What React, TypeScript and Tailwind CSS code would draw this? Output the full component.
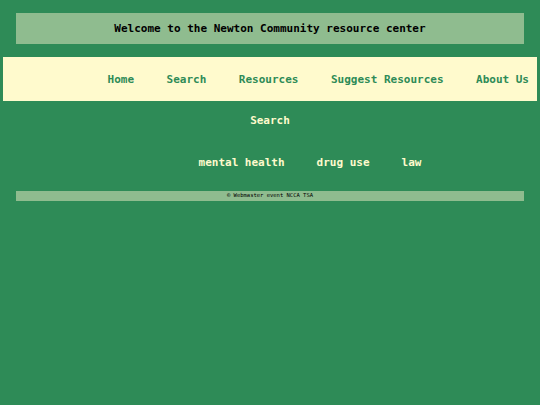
export default function App() {
  const mono = { fontFamily: '"DejaVu Sans Mono", monospace' }
  return (
    <div className="min-h-screen bg-[#2e8b57] flex flex-col" style={mono}>
      {/* Welcome banner */}
      <header className="mx-4 mt-[13px] h-[31px] bg-[#8fbc8f] flex items-center justify-center pt-[1px]">
        <h1 className="text-[11px] font-bold text-black">Welcome to the Newton Community resource center</h1>
      </header>

      {/* Nav */}
      <nav className="mx-[3px] mt-[13px] h-[44px] bg-[#fffacd] flex items-center justify-end gap-[32.5px] pr-2 pt-[2px]">
        {['Home', 'Search', 'Resources', 'Suggest Resources', 'About Us'].map((l) => (
          <a key={l} className="text-[11px] font-bold text-[#2e8b57]">
            {l}
          </a>
        ))}
      </nav>

      <div className="h-[38px] flex items-center justify-center pt-[2px]">
        <h2 className="text-[11px] font-bold text-[#fffacd]">Search</h2>
      </div>

      <ul className="h-[46px] flex items-center justify-center gap-8 pl-[80px] pt-[2px]">
        {['mental health', 'drug use', 'law'].map((t) => (
          <li key={t} className="text-[11px] font-bold text-[#fffacd]">
            {t}
          </li>
        ))}
      </ul>

      {/* Footer */}
      <footer className="mx-4 mt-[6px] h-[10px] bg-[#8fbc8f] flex items-center justify-center">
        <p className="text-[5.5px] leading-none text-black">© Webmaster event NCCA TSA</p>
      </footer>
    </div>
  )
}
